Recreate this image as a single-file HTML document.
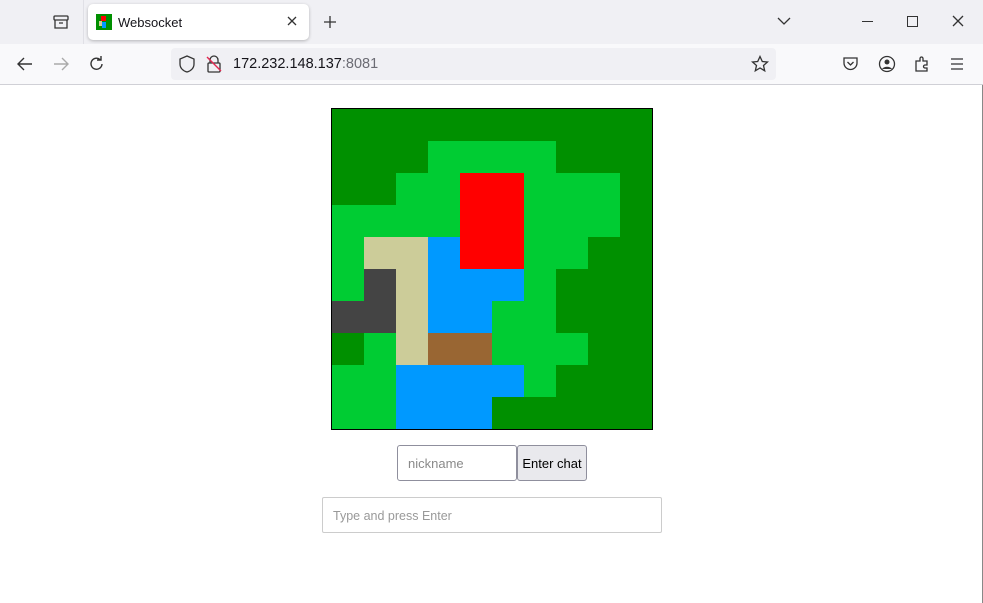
<!DOCTYPE html>
<html><head><style>
*{margin:0;padding:0;box-sizing:border-box}
body{width:983px;height:603px;overflow:hidden;background:#fff;font-family:"Liberation Sans","DejaVu Sans",sans-serif;position:relative}
.abs{position:absolute}
</style></head><body>
<div class="abs" style="left:0;top:0;width:983px;height:44px;background:#f0f0f4"></div>
<div class="abs" style="left:83px;top:0;width:1px;height:44px;background:#e0e0e6"></div>
<div class="abs" style="left:88px;top:4px;width:221px;height:36px;background:#fff;border-radius:5px;box-shadow:0 1px 3px rgba(0,0,0,.25)"></div>
<svg class="abs" style="left:96px;top:14px" width="16" height="16"><rect width="16" height="16" fill="#009000"/><rect x="5" y="2" width="5" height="5" fill="#f00"/><rect x="3" y="7" width="3" height="5" fill="#cc9"/><rect x="6" y="8" width="4" height="6" fill="#09f"/></svg>
<div class="abs" style="left:118px;top:15px;font-size:13px;color:#15141a">Websocket</div>
<svg class="abs" style="left:286px;top:15px" width="12" height="12"><path d="M2 2L10 10M10 2L2 10" stroke="#333" stroke-width="1.3"/></svg>
<svg class="abs" style="left:323px;top:15px" width="14" height="14"><path d="M7 1V13M1 7H13" stroke="#333" stroke-width="1.3"/></svg>
<svg class="abs" style="left:52px;top:13px" width="18" height="18"><rect x="2" y="3" width="14" height="4" rx="1" fill="none" stroke="#333" stroke-width="1.3"/><path d="M3 7V15H15V7M7 10H11" fill="none" stroke="#333" stroke-width="1.3"/></svg>
<svg class="abs" style="left:777px;top:15px" width="14" height="12"><path d="M1 3L7 9L13 3" fill="none" stroke="#333" stroke-width="1.3"/></svg>
<div class="abs" style="left:862px;top:21px;width:11px;height:1px;background:#333"></div>
<div class="abs" style="left:907px;top:16px;width:11px;height:11px;border:1.3px solid #333"></div>
<svg class="abs" style="left:952px;top:15px" width="12" height="12"><path d="M1 1L11 11M11 1L1 11" stroke="#333" stroke-width="1.3"/></svg>
<div class="abs" style="left:0;top:44px;width:983px;height:40px;background:#f9f9fb"></div>
<div class="abs" style="left:0;top:84px;width:983px;height:1px;background:#d0d0d6"></div>
<svg class="abs" style="left:16px;top:56px" width="18" height="16"><path d="M16 8H2M8 2L2 8L8 14" fill="none" stroke="#333" stroke-width="1.4"/></svg>
<svg class="abs" style="left:52px;top:56px" width="18" height="16"><path d="M2 8H16M10 2L16 8L10 14" fill="none" stroke="#aaa" stroke-width="1.4"/></svg>
<svg class="abs" style="left:88px;top:55px" width="18" height="18"><path d="M14 9A5.5 5.5 0 1 1 12 4.5M13 1V5H9" fill="none" stroke="#333" stroke-width="1.4"/></svg>
<div class="abs" style="left:171px;top:48px;width:605px;height:32px;background:#f0f0f4;border-radius:4px"></div>
<svg class="abs" style="left:178px;top:55px" width="18" height="18"><path d="M9 1L2 4V9C2 13 5 16 9 17C13 16 16 13 16 9V4Z" fill="none" stroke="#333" stroke-width="1.3"/></svg>
<svg class="abs" style="left:205px;top:55px" width="18" height="18"><rect x="3" y="8" width="12" height="9" rx="1" fill="none" stroke="#333" stroke-width="1.3"/><path d="M5 8V5A4 4 0 0 1 13 5V8" fill="none" stroke="#333" stroke-width="1.3"/><path d="M2 2L16 16" stroke="#e22850" stroke-width="1.4"/></svg>
<div class="abs" style="left:233px;top:56px;font-size:14.5px;color:#15141a">172.232.148.137<span style="color:#6c6c74">:8081</span></div>
<svg class="abs" style="left:751px;top:55px" width="18" height="18"><path d="M9 1.5L11.3 6.5L16.5 7L12.5 10.5L13.7 15.8L9 13L4.3 15.8L5.5 10.5L1.5 7L6.7 6.5Z" fill="none" stroke="#333" stroke-width="1.3"/></svg>
<svg class="abs" style="left:842px;top:56px" width="17" height="16"><path d="M2 2H15V7A6.5 6.5 0 0 1 2 7Z" fill="none" stroke="#333" stroke-width="1.3"/><path d="M5.5 6L8.5 9L11.5 6" fill="none" stroke="#333" stroke-width="1.3"/></svg>
<svg class="abs" style="left:878px;top:55px" width="18" height="18"><circle cx="9" cy="9" r="7.5" fill="none" stroke="#333" stroke-width="1.3"/><circle cx="9" cy="7" r="2.5" fill="#333"/><path d="M4 14C6 11 12 11 14 14" fill="#333"/></svg>
<svg class="abs" style="left:913px;top:55px" width="18" height="18"><path d="M3 6H7V3.5A1.5 1.5 0 0 1 10 3.5V6H14V10H12A1.5 1.5 0 0 0 12 13H14V16H3Z" fill="none" stroke="#333" stroke-width="1.3"/></svg>
<svg class="abs" style="left:950px;top:57px" width="14" height="14"><path d="M1 2H13M1 7H13M1 12H13" stroke="#333" stroke-width="1.3"/></svg>
<div class="abs" style="left:982px;top:85px;width:1px;height:518px;background:#888"></div>

<svg class="abs" style="left:331px;top:108px" width="322" height="322">
<rect x="0.5" y="0.5" width="321" height="321" fill="#009000" stroke="#000"/>
<g transform="translate(1,1)">
<rect x="96" y="32" width="128" height="32" fill="#00cc33"/>
<rect x="64" y="64" width="64" height="32" fill="#00cc33"/><rect x="128" y="64" width="64" height="32" fill="#f00"/><rect x="192" y="64" width="96" height="32" fill="#00cc33"/>
<rect x="0" y="96" width="128" height="32" fill="#00cc33"/><rect x="128" y="96" width="64" height="32" fill="#f00"/><rect x="192" y="96" width="96" height="32" fill="#00cc33"/>
<rect x="0" y="128" width="32" height="32" fill="#00cc33"/><rect x="32" y="128" width="64" height="32" fill="#cccc99"/><rect x="96" y="128" width="32" height="32" fill="#0099ff"/><rect x="128" y="128" width="64" height="32" fill="#f00"/><rect x="192" y="128" width="64" height="32" fill="#00cc33"/>
<rect x="0" y="160" width="32" height="32" fill="#00cc33"/><rect x="32" y="160" width="32" height="32" fill="#444"/><rect x="64" y="160" width="32" height="32" fill="#cccc99"/><rect x="96" y="160" width="96" height="32" fill="#0099ff"/><rect x="192" y="160" width="32" height="32" fill="#00cc33"/>
<rect x="0" y="192" width="64" height="32" fill="#444"/><rect x="64" y="192" width="32" height="32" fill="#cccc99"/><rect x="96" y="192" width="64" height="32" fill="#0099ff"/><rect x="160" y="192" width="64" height="32" fill="#00cc33"/>
<rect x="32" y="224" width="32" height="32" fill="#00cc33"/><rect x="64" y="224" width="32" height="32" fill="#cccc99"/><rect x="96" y="224" width="64" height="32" fill="#996633"/><rect x="160" y="224" width="96" height="32" fill="#00cc33"/>
<rect x="0" y="256" width="64" height="32" fill="#00cc33"/><rect x="64" y="256" width="128" height="32" fill="#0099ff"/><rect x="192" y="256" width="32" height="32" fill="#00cc33"/>
<rect x="0" y="288" width="64" height="32" fill="#00cc33"/><rect x="64" y="288" width="96" height="32" fill="#0099ff"/>
</g></svg>

<div class="abs" style="left:397px;top:445px;width:120px;height:36px;border:1px solid #8f8f9d;border-radius:3px;font-size:13px;color:#8a8a8a;padding:10px 0 0 10px">nickname</div>
<div class="abs" style="left:517px;top:445px;width:70px;height:36px;border:1px solid #8f8f9d;border-radius:3px;background:#e9e9ed;font-size:13px;color:#000;text-align:center;padding-top:10px">Enter chat</div>
<div class="abs" style="left:322px;top:497px;width:340px;height:36px;border:1px solid #ccc;border-radius:2px;font-size:12.5px;color:#999;padding:11px 0 0 10px">Type and press Enter</div>
</body></html>
